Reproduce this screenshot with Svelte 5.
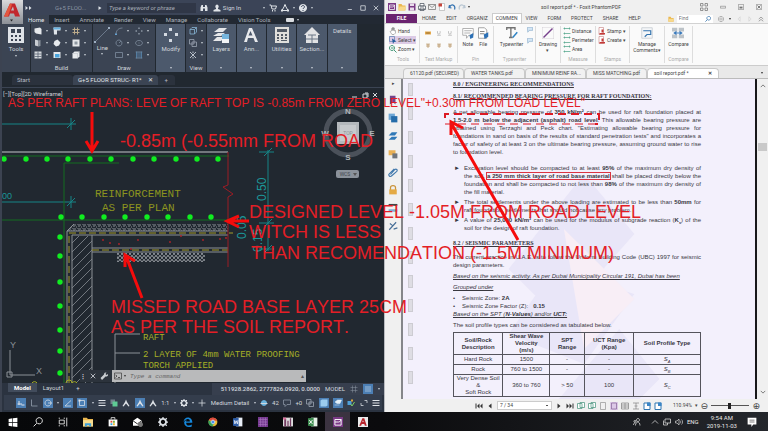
<script>
  // Each icon is a list of [path, fill, stroke, stroke width] on a 16x16 grid
  const W = '#dfe3e8';
  const P = '#7a3a86';
  const icons = {
    more: [['M1 4l5 4-5 4zM8 4l5 4-5 4z', W]],
    play: [['M4 3l8 5-8 5z', W]],
    find: [['M1 14V7l2-5h3v12zM10 14V2h3l2 5v7zM6 6h4v3H6z', W]],
    user: [['M8 1a4 4 0 0 1 2 7v2l5 2v3H1v-3l5-2V8a4 4 0 0 1 2-7z', W]],
    cart: [['M1 2h3l2 8h7l2-6H5', '', W, 2], ['M6 12h2v3H6zM11 12h2v3h-2z', W]],
    tri: [['M8 2l6 11H2z', '', W, 2], ['M6 1h4v3H6zM0 11h4v4H0zM12 11h4v4h-4z', W]],
    help: [['M8 0a8 8 0 1 1-.1 0z', W], ['M5 6c0-4 6-4 6 0 0 2-3 2-3 4M8 12v2', '', '#39435a', 2]],
    min: [['M2 12h11', '', W, 2]],
    max: [['M2 2h12v12H2z', '', W, 2]],
    close: [['M2 2l12 12M14 2L2 14', '', W, 2]],
    tools: [['M0 0h16v16H0z', W], ['M3 2h4v4H3zM9 2h4v4H9zM3 8h2v2H3zM7 8h2v2H7zM11 8h2v2h-2zM3 12h2v2H3zM7 12h2v2H7zM11 12h2v2h-2z', '#3b4453']],
    wall: [['M1 3l11-2 3 3v11l-11-2-3-3z', '#e5e8eb']],
    door: [['M2 1l7 2v12l-7-2z', '#c9cdd2'], ['M9 3l4-1v12l-4 1z', '#8a929c']],
    window: [['M1 1h14v14H1z', '#d5d9dd'], ['M8 1v14M1 6h14M1 11h14', '', '#535e6e', 1.5]],
    beam: [['M1 1h14v6H8v8H2z', '#e0e5ea'], ['M1 1h14v4H1z', '#68b4e2']],
    cup: [['M3 4l6-3 6 6-3 6-6 2-5-5z', '#e8ebee']],
    screen: [['M1 2h14v12H1z', '#e3e7eb'], ['M4 6h9v7H4z', '#49a4dd']],
    grid: [['M5 1v14M11 1v14M1 5h14M1 11h14', '', '#bbaa8a', 2]],
    frame: [['M1 1h14v14H1z', '#e4e7ea'], ['M5 5h6v6H5z', '#8d96a0']],
    box: [['M1 5l4-4h10v10l-4 4H1z', '#e9ecef'], ['M1 5h10v10M11 5l4-4', '', '#b7bdc4', 1]],
    line: [['M1 15L15 1', '', '#8391a3', 0.7], ['M0 14h2v2H0zM14 0h2v2h-2z', '#9fb0c3']],
    arc: [['M2 15C2 7 7 2 15 2', '', '#8391a3', 1.5], ['M0 13h4v3H0z', '#65a0cf']],
    circle: [['M8 2a6 6 0 1 1-.1 0zM8 8l4-4', '', '#8391a3', 1.5]],
    rect: [['M1 3h14v10H1z', '', '#8391a3', 1.5]],
    points: [['M7 1h2v3H7zM1 7h3v2H1zM12 7h3v2h-3zM7 12h2v3H7z', '#b2bdca']],
    oval: [['M8 3c9 0 9 10 0 10S-1 3 8 3zM7 8h2', '', '#8391a3', 1.5]],
    hatch: [['M3 1v14M6 1v14M10 1v14M13 1v14', '', '#5b8fb9', 1.5], ['M1 2h14M1 14h14', '', '#8391a3', 1]],
    cube: [['M2 5h9v9H2zM2 5l4-4h9v9l-4 4M11 5l4-4', '', '#8bbad9', 1.5]],
    copy: [['M1 1h9v9H1zM6 6h9v9H6z', '', '#a0aab7', 1.5]],
    cross: [['M2 2l12 12M14 2L2 14M8 1v3M8 12v3', '', '#b8c0ca', 2]],
    modify: [['M6 1h3v3H6zM1 6h3v3H1zM12 6h3v3h-3zM6 12h3v3H6z', '#d4dae2']],
    layers: [['M1 5l5-4h8l-4 4zM0 9l5-3h7l-4 3zM0 14l4-4h8l-4 4z', '#e5e7e9'], ['M9 7h7v9H9z', '#76b6de'], ['M9 12h7v4H9z', '#f3f5f7']],
    text: [['M1 15L6 1h3l6 14h-3l-1.500-4H5l-1 4zM5.500 8.500h4L7.500 4z', '#e8eaed']],
    calc: [['M1 0h14v16H1z', '#e0dfdc'], ['M3 2h10v3H3zM3 7h2v2H3zM7 7h2v2H7zM11 7h2v2h-2zM3 10h2v2H3zM7 10h2v2H7zM11 10h2v2h-2zM3 13h2v1H3zM7 13h6v1H7z', '#535b66']],
    house: [['M0 8l8-8 8 8h-2v8H2V8z', '#e1e2e4'], ['M4 8h8M8 8v8M2 12h12', '', '#6b7686', 1]],
    wrench: [['M1 12l7-7a4 4 0 0 1 5-4l-2 3 2 2 3-2a4 4 0 0 1-5 5l-7 7z', '#c8ccd0']],
    prompt: [['M1 2h14v12H1z', '', '#444', 1.500], ['M3 6l3 2-3 3M8 11h4', '', '#333', 1.500]],
    ortho: [['M3 1v13h12', '', '#9aa6b4', 1.500]],
    infer: [['M1 10h9M4 4v8M9 12h6', '', W, 2]],
    polar: [['M8 2a6 6 0 1 1-.1 0zM8 8h8', '', W, 1.500]],
    iso: [['M2 14L14 3M2 14h12', '', W, 1.500]],
    snap: [['M3 3h10v10H3z', '', W, 1.500], ['M1 1h4v4H1z', W]],
    lines: [['M1 3h14M1 8h14M1 13h14', '', W, 2]],
    green: [['M1 1h9v9H1z', '#73808b'], ['M5 5h10v10H5z', '#5ecb95']],
    man: [['M8 1l2 5 5 8-2 1-5-6-5 6-2-1 5-8z', W]],
    gear: [['M8 3a5 5 0 1 1-.1 0z', '', W, 3], ['M8 0v3M8 13v3M0 8h3M13 8h3M2 2l3 3M11 11l3 3M14 2l-3 3M5 11l-3 3', '', W, 2]],
    plus: [['M8 1v14M1 8h14', '', W, 1.500]],
    globe: [['M8 2a6 6 0 1 1-.1 0z', '#6bb4df'], ['M1 8h14v2H1z', '#cdd6de']],
    note: [['M1 2h14v9H8l-4 4v-4H1z', '', '#8f9aa8', 1.500]],
    blue: [['M1 3l3-2h11v12l-3 2H1z', '#9ccdf0']],
    pages: [['M2 6l5-4h8l-3 7H6zM1 12h10', '#e4f0f8', '#e4f0f8', 1]],
    tick: [['M1 4h8v8H1z', '#4f9fd8'], ['M7 10l3 4 5-8', '', '#7bcf65', 2], ['M8 1h4v4H8z', '#d9a63a']],
    expand: [['M9 3h5v5M7 13H2V8', '', W, 1.500]],
    dots: [['M3 3h2v2H3zM7 3h2v2H7zM11 3h2v2h-2zM3 7h2v2H3zM7 7h2v2H7zM11 7h2v2h-2zM3 11h2v2H3zM7 11h2v2H7zM11 11h2v2h-2z', '#eef5fb']],
    mesh: [['M5 1v14M11 1v14M1 5h14M1 11h14', '', '#8c96a3', 1]],
    fox: [['M0 0h16v16H0z', P], ['M3 4h10v9H3zM3 8h6M9 8c3 0 3-3 4-4', '', '#fff', 1.500]],
    folder: [['M1 2h6l2 3h6v10H1z', '#eab74f'], ['M3 7h13l-3 8H1z', '#f8d98b']],
    explorer: [['M0 1h6l2 2h8v12H0z', '#eab74f'], ['M0 5h16v10H0z', '#f8dc8e'], ['M3 15v-5h10v5h-3v-2H6v2z', '#3f9fd8']],
    save: [['M1 1h14v14H1z', P], ['M4 1h8v5H4zM4 9h8v6H4z', '#e9dcec']],
    print: [['M4 1h8v5H4zM1 6h14v7H1zM4 10h8v5H4z', '#fff', '#4d5560', 1.500]],
    mail: [['M1 3h14v10H1zM1 3l7 6 7-6', '', '#777', 1.500]],
    page: [['M3 1h10v14H3z', '#fff', '#999', 1], ['M1 1h7v6H1z', '#c6453b']],
    undo: [['M3 4l-1 5 5 1M3 9c3-9 13-5 10 4', '', '#3573b1', 2.500]],
    redo: [['M13 4l1 5-5 1M13 9C10 0 0 4 3 13', '', '#b9c6d2', 2.500]],
    hand: [['M5 8V3l2-1v5V1h2v6V2h2v6l2-1v5l-3 3H6L2 9z', '#fff', '#777', 1]],
    select: [['M1 1h10v10H1z', '', '#6486b4', 1.500], ['M6 5l9 6-5 1-2 4z', '#245c9c']],
    zoom: [['M6 1a5 5 0 1 1-.1 0zM10 10l5 5M4 6h5', '', '#48997b', 2]],
    abc: [['M0 4h16v8H0z', '#e5a94c'], ['M3 8h10', '', '#73552c', 2]],
    under: [['M4 3v5c0 4 7 4 7 0V3M3 14h10', '', '#999', 1.500]],
    tee: [['M3 3h10M8 3v10M3 8h10', '', '#b28b57', 2]],
    comment: [['M1 2h14v9H9l-3 4v-4H1z', '#fff', '#9a9a9a', 1], ['M3 5h10M3 8h8', '', '#9a9a9a', 1], ['M10 11l5-3v6l-4 2z', '#2c70b5']],
    attach: [['M2 1h8l3 3v11H2z', '#fff', '#888', 1], ['M4 6h6M4 9h6', '', '#888', 1.500], ['M9 10l6-3v6l-5 3z', '#2c70b5']],
    type: [['M1 4V1h11v3M6.500 1v13M4 14h5', '', '#737373', 1.800], ['M9 14l6-7', '', '#2e83c4', 2]],
    callout: [['M1 1h14v8H6l-4 5z', '#d5e7f5', '#4a7fae', 1]],
    draw: [['M2 14L14 2', '', '#77408c', 2], ['M0 0h16v16H0z', '', '#c9c4cc', 1]],
    ruler: [['M1 3h14M1 13h14M3 1v4M13 1v4M3 11v4', '', '#53a58b', 1.500]],
    stamp: [['M2 1h9v14H2z', '#fff', '#b66', 1], ['M3 12h11v3H3zM7 5h4v6H7z', '#c43b38']],
    manage: [['M1 1h14v14H1z', '#f4f6f8', '#c2c8ce', 1], ['M3 5h10v5H8l-3 3', '', '#3272ad', 1.500]],
    compare: [['M0 1h7v5H0zM9 1h7v5H9zM0 10h7v5H0zM9 10h7v5H9z', '#bdc3c8'], ['M3 8h10M6 6L3 8l3 2M10 6l3 2-3 2', '', '#3979bb', 1.500]],
    tiles: [['M1 1h5v5H1zM10 1h5v5h-5zM1 10h5v5H1zM10 10h5v5h-5z', '', '#777', 1.500]],
    dash: [['M1 6h14v5H1z', '', '#777', 1.500]],
    pin: [['M1 1h14v14H1z', '', '#777', 1.500], ['M4 7h8v5H4z', '#777']],
    quit: [['M1 1h14v14H1z', '', '#777', 1.500], ['M4 4l8 8M12 4l-8 8', '', '#555', 2]],
    bookmark: [['M3 1h9v14l-4-4-5 4z', '#71458c']],
    stack: [['M1 1h10v10H1z', '#6ea8d6'], ['M5 5h10v10H5z', '#256da9']],
    sheets: [['M1 7l5-5h9l-4 5zM1 14l5-5h9l-4 5z', '#2f79b7']],
    tag: [['M1 2h11v8H1z', '#eab154'], ['M7 7h8v8H7z', '#70757b']],
    clip: [['M4 12l7-8c2-2 5 1 3 3l-8 7c-3 3-6-1-4-3l8-8', '', '#4279ac', 1.800]],
    lock: [['M4 8V4c0-4 8-4 8 0v4', '', '#c9933a', 2], ['M2 7h12v8H2z', '#e4aa43']],
    sign: [['M2 14L13 2M3 4l4 3M9 13l6-2', '', '#476f98', 1.800]],
    bars: [['M1 3h14', '', '#444', 3], ['M1 10h14v4H1z', '#7facd6']],
    lens: [['M10 1a5 5 0 1 1-.1 0zM6 10l-5 5', '', '#2f6ea8', 2]],
    leaf: [['M3 1h10v14H3z', '', '#999', 1.500]],
    leafon: [['M0 0h16v16H0z', '#dcc9e7'], ['M3 2h10v12H3z', '', '#8a6a9b', 1.500]],
    cols: [['M1 2h14v12H1zM8 2v12M1 6h14M1 10h14', '', '#888', 1.500]],
    fit: [['M2 2h12M2 14h12M8 2v12M5 8h6', '', '#888', 1.500]],
    rotate: [['M2 2h12v13H2z', '#fff', '#2f76b1', 2], ['M8 1h7v7H8z', '#3b86c6']],
    jump: [['M1 3h9v10H1zM6 1h9v10H6z', '#fff', '#4e9780', 1.500]],
    first: [['M2 3v10', '', '#333', 2], ['M9 3L4 8l5 5zM15 3l-5 5 5 5z', '#333']],
    prev: [['M11 3L5 8l6 5z', '#333']],
    next: [['M5 3l6 5-6 5z', '#333']],
    last: [['M14 3v10', '', '#333', 2], ['M1 3l5 5-5 5zM7 3l5 5-5 5z', '#333']],
    start: [['M1 3l6-1v6H1zM8 2l7-1v7H8zM1 9h6v6l-6-1zM8 9h7v7l-7-1z', '#fff']],
    search: [['M10 1a5 5 0 1 1-.1 0zM6 10l-5 5', '', '#eee', 1.500]],
    task: [['M2 1v2M2 5h8v6H2zM2 13v2M10 1v2M10 13v2M14 1v14', '', '#ddd', 1.500]],
    store: [['M5 4V1h6v3', '', '#fff', 1.200], ['M1 4h14v11H1z', '#fff'], ['M4 6h3v3H4z', '#e34f35'], ['M8 6h3v3H8z', '#78b542'], ['M4 10h3v3H4z', '#37a6de'], ['M8 10h3v3H8z', '#f0bb35']],
    post: [['M0 6l7-5 7 5v8H0z', '#fff'], ['M0 6l7 5 7-5', '', '#222', 1.500], ['M12 8a4 4 0 1 1-.1 0z', '#777']],
    edge: [['M1 8C1-2 15-2 15 9H5c0 6 6 5 9 3v3C8 18 1 14 2 8c1-2 3-3 5-4-2 1-2 2-2 3h6c0-5-6-5-10 1z', '#1688dc']],
    chrome: [['M8 1a7 7 0 1 1-.1 0z', '#e8bd35'], ['M1 5c4-7 12-4 14 1H8z', '#dd4b3d'], ['M1 5c-2 6 2 10 6 10l3-5z', '#36a15b'], ['M8 5a3 3 0 1 1-.1 0z', '#4a8df0', '#fff', 1]],
    word: [['M5 1h10v14H5z', '#e8eef7'], ['M0 2l9-1v14l-9-1z', '#2d5ca6'], ['M2 5l1 6 2-5 2 5 1-6', '', '#fff', 1.200]],
    purple: [['M0 0h16v16H0z', '#75398f'], ['M4 1v14M8 1v14M12 1v14M1 4h14M1 8h14M1 12h14', '', '#a773bd', 1]],
    photo: [['M0 1h16v14H0z', '#ddd'], ['M2 3h3v12H2zM7 6h2v9H7zM11 2h2v13h-2z', '#733c61'], ['M0 1h5v3H0z', '#db6f9d']],
    excel: [['M5 1h10v14H5z', '#e6f2e8'], ['M0 2l9-1v14l-9-1z', '#3e8c50'], ['M2 5l5 6M7 5l-5 6', '', '#fff', 1.500]],
    cad: [['M0 0h16v16H0z', '#ececec'], ['M2 14L7 2h3l4 12h-3l-1-3H6l-1 3zM7 8h2L8 5z', '#b8232b']],
    people: [['M10 1a3 3 0 1 1-.1 0zM5 15c0-9 9-9 9 0M4 5a2 2 0 1 1-.1 0zM1 14c0-3 1-4 3-4', '', '#ddd', 1.500]],
    up: [['M2 11l6-6 6 6', '', '#ddd', 1.500]],
    net: [['M4 2h11v8H4zM1 5v9h8M9 10v4', '', '#ddd', 1.500]],
    sound: [['M1 6h3l4-4v12l-4-4H1zM10 5c2 2 2 4 0 6M13 3c3 3 3 7 0 10', '', '#ddd', 1.300]],
    notice: [['M1 1h14v11H10l-3 4v-4H1z', '#fff'], ['M4 5h8M4 8h8', '', '#333', 1]],
    ring: [['M8 1a7 7 0 1 1-.1 0zM8 5a3 3 0 1 1-.1 0z', '', '#888', 1.500]],
    back: [['M11 2L5 8l6 6z', '', '#bbb', 1]],
    ahead: [['M5 2l6 6-6 6z', '', '#bbb', 1]],
    fold: [['M2 8l6-5 6 5M2 14l6-5 6 5', '', '#666', 1.500]],
    scrollup: [['M2 11l6-6 6 6', '', '#555', 2]],
    scrolldown: [['M2 5l6 6 6-6', '', '#555', 2]],
  };

  const cadTabs = ['Home', 'Insert', 'Annotate', 'Render', 'View', 'Manage', 'Collaborate', 'Vision Tools'];
  const build = ['wall', 'beam', 'grid', 'door', 'cup', 'frame', 'window', 'screen', 'box'];
  const draw = ['arc', 'points', 'circle', 'oval', 'rect', 'hatch'];
  const panels = [
    ['layers', 'Layers'],
    ['text', 'Ann...'],
    ['calc', 'Utilities'],
    ['house', 'Section...'],
    ['', 'Details'],
  ];
  const pdfTabs = ['HOME', 'EDIT', 'ORGANIZ', 'COMMEN', 'VIEW', 'FORM', 'PROTECT', 'SHARE', 'HELP'];
  const docs = ['61120.pdf (SECURED)', 'WATER TANKS.pdf', 'MINIMUM REINF RA...', 'MISS MATCHING.pdf', 'soil report.pdf *'];
  const side = ['bookmark', 'stack', 'sheets', 'tag', 'clip', 'lock', 'bars', 'sign'];
  const apps = ['start', 'search', 'task', 'explorer', 'store', 'post', 'gear', 'edge', 'chrome', 'word', 'purple', 'photo', 'excel', 'fox', 'cad'];

  const topBars = [4, 26, 47, 68, 90, 111, 133, 154, 176, 197, 218];
  const lowBars = [61, 82, 104, 125, 147, 168, 190, 211];
  const sideBars = [237, 256, 282, 306, 330, 351, 373];
  const specks = [[103, 240], [110, 243], [119, 244], [131, 249], [138, 240], [170, 242], [181, 236], [203, 240], [220, 239], [226, 238]];

  const soils = [
    ['Hard Rock', '1500', '-', '-', 'A'],
    ['Rock', '760  to  1500', '-', '-', 'B'],
    ['Very Dense Soil\n&\nSoft Rock', '360  to  760', '> 50', '100', 'C'],
  ];
</script>

{#snippet icon(name, size = 's')}
  <svg class="icon {size}" viewBox="0 0 16 16" aria-hidden="true">
    {#each icons[name] as [d, fill, stroke, width]}
      <path {d} fill={fill || 'none'} stroke={stroke || 'none'} stroke-width={width || 0} />
    {/each}
  </svg>
{/snippet}

<div class="desktop">
  <main class="windows">
    <section class="cad">
      <header class="cad-top">
        <button class="logo" aria-label="Application menu">
          <svg viewBox="0 0 20 20"><path d="M2 14L8 1h5l5 13h-5l-1-3H8l-1 3zM9 8h3l-1-4z" fill="#c2272d" /><path d="M2 14L8 1l2 1-4 12z" fill="#e4573f" /><path d="M8 17h3l-1.500 2z" fill="#222" /></svg>
        </button>
        <div class="cad-head">
          <div class="cad-title">
            {@render icon('more')}
            <span class="file-name">G+5 FLOO...</span>
            {@render icon('play', 'xs')}
            <input class="keyword" aria-label="Search" placeholder="Type a keyword or phrase" />
            {@render icon('find')}
            <button class="sign">{@render icon('user')} Sign In</button>
            <i class="caret"></i>
            {@render icon('cart')}
            {@render icon('tri')}
            <i class="caret"></i>
            {@render icon('help')}
            <i class="caret"></i>
            <div class="win-buttons">
              <button aria-label="Minimize">{@render icon('min', 'xs')}</button>
              <button aria-label="Maximize">{@render icon('max', 'xs')}</button>
              <button aria-label="Close">{@render icon('close', 'xs')}</button>
            </div>
          </div>
          <nav class="cad-tabs">
            {#each cadTabs as tab}
              <button class:active={tab === 'Home'}>{tab}</button>
            {/each}
            <span class="media"></span><i class="caret"></i>
          </nav>
        </div>
      </header>

      <div class="ribbon">
        <div class="panel tall">{@render icon('tools', 'l')}<span>Tools</span><i class="caret"></i></div>
        <div class="panel set">
          <div class="grid three">
            {#each build as name}<span class="pick">{@render icon(name)}<i class="caret"></i></span>{/each}
          </div>
          <span class="panel-name">Build</span>
        </div>
        <div class="panel set">
          <div class="draw">
            <div class="line">{@render icon('line', 'l')}<span>Line</span><i class="caret"></i></div>
            <div class="grid two">
              {#each draw as name}<span class="pick">{@render icon(name)}<i class="caret"></i></span>{/each}
            </div>
          </div>
          <span class="panel-name">Draw</span>
        </div>
        <div class="panel tall blue">{@render icon('modify', 'l')}<span>Modify</span><i class="caret end"></i></div>
        <div class="panel set">
          <div class="grid one">
            {#each ['cube', 'copy', 'cross'] as name}<span class="pick">{@render icon(name)}<i class="caret"></i></span>{/each}
          </div>
          <span class="panel-name">View</span>
        </div>
        {#each panels as [name, label]}
          <div class="panel tall blue">
            {#if name}{@render icon(name, 'l')}{/if}
            <span>{label}</span><i class="caret end"></i>
          </div>
        {/each}
      </div>

      <nav class="cad-docs">
        <button>Start</button>
        <button class="active">G+5 FLOOR STRUC- R1*<b>✕</b></button>
        <button class="add">+</button>
      </nav>

      <div class="canvas">
        <svg class="drawing" viewBox="2 88 382 295" preserveAspectRatio="xMinYMin slice">
          <defs>
            <pattern id="wall" width="9" height="9" patternUnits="userSpaceOnUse">
              <path d="M-1 10L10-1M3 15L15 3M-6 6L6-6" stroke="#858b92" stroke-width="0.8" />
            </pattern>
            <pattern id="speck" width="5" height="4" patternUnits="userSpaceOnUse">
              <path d="M0 1h1M2 0h1M3 2h2M1 3h1M4 0v1" stroke="#a3a8ad" stroke-width="0.8" />
            </pattern>
            <pattern id="weave" width="4" height="4" patternUnits="userSpaceOnUse">
              <path d="M0 0l4 4M4 0L0 4M2 0v2" stroke="#9ca1a6" stroke-width="0.7" />
            </pattern>
          </defs>

          <g class="cyan">
            <path d="M2 124h74M2 202h74M71 118v12M71 196v12M67 128l8-8M67 206l8-8" />
            <path d="M268 150v101M259 152h15M259 223h15M259 249h15M264 156l8-8M264 227l8-8M264 253l8-8" />
            <text class="dim" x="2" y="199">00</text>
            <text class="dim big" transform="translate(266 201) rotate(-90)">0.50</text>
            <text class="dim big" transform="translate(246 239) rotate(-90)">0.05</text>
            <text class="dim big" transform="translate(262 252) rotate(-90)">0.15</text>
          </g>

          <g class="rebar">
            <path d="M2 156h227M2 220h227M119 163H64v220" />
            {#each topBars as x}<circle cx={x} cy="159" r="2.700" />{/each}
            {#each lowBars as x}<circle cx={x} cy="217" r="2.700" />{/each}
            {#each sideBars as y}<circle cx="60" cy={y} r="2.700" />{/each}
          </g>

          <path d="M67 231l7-7h154v7z" fill="url(#speck)" />
          <rect x="72" y="236" width="20" height="147" fill="url(#wall)" />
          <rect x="117" y="253" width="88" height="9" fill="url(#weave)" />
          <path class="white" d="M67 383V231l7-7M67 231h161M228 235H72v148M92 235v148M92 248h136M92 252h136" />
          <path class="white bright" d="M2 152h226" />
          <path class="yellow dash" d="M69 383V233h164M92 250h136" />
          <path class="break" d="M228 152v33l-5 2 10 7-5 3v70" />
          {#each specks as [x, y]}<circle cx={x} cy={y} r="0.900" fill="#b3222a" />{/each}

          <path class="leader" d="M140 334h-25v49M115 353h25" />
          <g class="olive">
            <text class="label" x="95" y="197">REINFORCEMENT</text>
            <text class="label" x="102" y="211">AS PER PLAN</text>
          </g>
          <g class="lime">
            <text class="callout" x="143" y="340">RAFT</text>
            <text class="callout" x="143" y="357">2 LAYER OF 4mm WATER PROOFING</text>
            <text class="callout" x="143" y="368">TORCH APPLIED</text>
            <path d="M32 383a3 3 0 0 1 5 0M66 383a3 3 0 0 1 6 0M72 383a3 3 0 0 1 5 0" fill="none" stroke="#a4aa27" />
          </g>

          <path class="ucs" d="M10 350v25h25M7 372h5v5H7z" />
          <text class="axis" x="10" y="348">Y</text>
          <text class="axis" x="36" y="374">X</text>

          <circle cx="348" cy="133" r="22" fill="none" stroke="#4b515a" stroke-width="5" />
          <rect x="337" y="122" width="22" height="22" fill="#b4b8bc" />
          <rect x="340" y="125" width="16" height="16" fill="#c6c9cc" />
          <text class="tiny" x="348" y="135">TOP</text>
          <g class="compass">
            <text x="348" y="114">N</text><text x="348" y="160">S</text><text x="325" y="136">W</text><text x="372" y="136">E</text>
          </g>
          <rect x="336" y="170" width="23" height="8" rx="2" fill="#8b929b" />
          <text class="tiny wcs" x="345" y="176">WCS</text>
          <path d="M353 173h4l-2 3z" fill="#555" />
          <path d="M352 97h5M363 94h4v4h-4zM365 93h3v4M373 93l4 4M377 93l-4 4" fill="none" stroke="#d5d9dd" />
          <text class="view" x="3" y="96">[−][Top][2D Wireframe]</text>
        </svg>
        <div class="command">
          <b>⋮</b>{@render icon('close', 'xs')}{@render icon('wrench')}
          <label>{@render icon('prompt')}<i class="caret dark"></i><input placeholder="Type a command" aria-label="Command" /><span>▴</span></label>
        </div>
      </div>

      <footer class="cad-foot">
        <div class="foot-row">
          <nav class="layouts"><button class="active">Model</button><button>Layout1</button><button>+</button></nav>
          <div class="coords"><b>511928.2862, 2777826.0920, 0.0000</b><span>MODEL</span>{@render icon('mesh')}<span class="on">{@render icon('dots')}</span><i class="caret"></i></div>
        </div>
        <div class="status">
          <span class="on">{@render icon('infer')}</span>
          {@render icon('ortho')}
          <span class="on">{@render icon('polar')}</span>
          <i class="caret"></i>
          <span class="on">{@render icon('iso')}</span>
          <span class="on">{@render icon('snap')}</span>
          <i class="caret"></i>
          {@render icon('lines')}{@render icon('green')}{@render icon('man')}
          <span class="on">{@render icon('man')}</span>
          {@render icon('man')}
          <span>1:1</span><i class="caret"></i>
          {@render icon('gear')}<i class="caret"></i>
          {@render icon('plus')}
          <span>Medium Detail</span><i class="caret"></i>
          {@render icon('globe')}<span>42</span>{@render icon('note')}<span>+0</span>{@render icon('copy')}
          <span class="on">{@render icon('blue')}</span>
          <span class="on">{@render icon('pages')}</span>
          {@render icon('tick')}{@render icon('expand')}{@render icon('lines')}
        </div>
      </footer>
    </section>

    <section class="pdf">
      <header class="pdf-title">
        <div class="quick">
          {#each ['fox', 'folder', 'save', 'print', 'mail', 'page', 'undo', 'redo'] as name}{@render icon(name)}{/each}
          <i class="caret dark"></i>
        </div>
        <span>soil report.pdf * - Foxit PhantomPDF</span>
        <div class="pdf-buttons">
          <button aria-label="Ribbon options">{@render icon('tiles')}</button>
          <button aria-label="Minimize">{@render icon('dash', 'xs')}</button>
          <button aria-label="Restore">{@render icon('pin', 'xs')}</button>
          <button aria-label="Close">{@render icon('quit', 'xs')}</button>
        </div>
      </header>
      <nav class="pdf-tabs">
        <button class="file">FILE</button>
        {#each pdfTabs as tab}<button class:active={tab === 'COMMEN'}>{tab}</button>{/each}
        <div class="finder">{@render icon('folder', 'xs')}<label><input aria-label="Find" placeholder="Find" />{@render icon('lens', 'xs')}</label></div>
        <div class="hints">{@render icon('ring', 'xs')}<i class="caret dark"></i>{@render icon('back', 'xs')}{@render icon('ahead', 'xs')}{@render icon('fold', 'xs')}</div>
      </nav>

      <div class="tools">
        <div class="tool-group hand">
          <button>{@render icon('hand')}Hand</button>
          <button class="chosen">{@render icon('select')}Select ▾</button>
          <button>{@render icon('zoom')}Zoom ▾</button>
          <small>Tools</small>
        </div>
        <div class="tool-group markup">
          <div class="marks">{#each ['abc', 'under', 'under', 'tee', 'tee', 'tee'] as name}{@render icon(name, 'xs')}{/each}</div>
          <small>Text Markup</small>
        </div>
        <div class="tool-group pins">
          <div class="pair"><button class="stacked">{@render icon('comment', 'b')}Note</button><button class="stacked">{@render icon('attach', 'b')}File</button></div>
          <small>Pin</small>
        </div>
        <div class="tool-group typing">
          <div class="pair"><button class="stacked">{@render icon('type', 'b')}Typewriter</button><div class="boxes">{@render icon('callout', 'xs')}{@render icon('callout', 'xs')}</div></div>
          <small>Typewriter</small>
        </div>
        <div class="tool-group drawing-tool"><button class="stacked">{@render icon('draw', 'b')}Drawing<br />▾</button></div>
        <div class="tool-group measure">
          <button>{@render icon('ruler')}Distance</button><button>{@render icon('ruler')}Perimeter</button><button>{@render icon('ruler')}Area</button>
          <small>Measure</small>
        </div>
        <div class="tool-group stamps">
          <button>{@render icon('stamp')}Stamp ▾</button><button>{@render icon('stamp')}Create ▾</button>
          <small>Stamps</small>
        </div>
        <div class="tool-group manage"><button class="stacked">{@render icon('manage', 'b')}Manage<br />Comments▾</button></div>
        <div class="tool-group compare"><button class="stacked">{@render icon('compare', 'b')}Compare</button><small>Compare</small></div>
      </div>

      <nav class="pdf-docs">
        {#each docs as doc, i}<button class:active={i === 4}>{doc}{#if i === 4}<b>✕</b>{/if}</button>{/each}
        <i class="caret dark"></i>
      </nav>

      <div class="reader">
        <aside><span>▸</span>{#each side as name}{@render icon(name, 'm')}{/each}</aside>
        <div class="sheet">
          <svg class="watermark" viewBox="0 0 350 320" preserveAspectRatio="none" aria-hidden="true">
            <path d="M180 95l50 60-75 85-50-50zM150 190l80 25-50 70-75-30zM215 250l40 50-20 20h-80z" fill="#e9e6f8" />
            <path d="M160 150l70 70-50 50z" fill="#f8eef6" />
          </svg>
          <div class="holes">{#each Array(13) as _}<i></i>{/each}</div>
          <article>
            <h2>8.0 / ENGINEERING RECOMMENDATIONS</h2>
            <h2 class="second">8.1/ RECOMMENDED BEARING PRESSURE FOR RAFT FOUNDATION:</h2>
            <p class="main">
              <span>A net allowable bearing pressure of <b>350 kN/m²</b> can be used for raft foundation placed at</span>
              <span><b>1.5-2.0 m below the adjacent (asphalt) road level</b>. This allowable bearing pressure are</span>
              <span>obtained using Terzaghi and Peck chart. "Estimating allowable bearing pressure for</span>
              <span>foundations in sand on basis of the results of standard penetration tests" and incorporates a</span>
              <span>factor of safety of at least 3 on the ultimate bearing pressure, assuming ground water to rise</span>
              <span class="left">to foundation level.</span>
            </p>
            <ul class="findings">
              <li>
                <span>Excavation level should be compacted to at least <b>95%</b> of the maximum dry density of</span>
                <span>the soil. <b class="boxed">a 250 mm thick layer of road base material</b> shall be placed directly below the</span>
                <span>foundation and shall be compacted to not less than <b>98%</b> of the maximum dry density of</span>
                <span class="left">the fill material.</span>
              </li>
              <li>
                <span>The total settlements under the above loading are estimated to be less than <b>50mm</b> for</span>
                <span class="left">raft foundation, settlements that should not cause any problem.</span>
              </li>
              <li>
                <span>A value of <b>25,000 kN/m³</b> can be used for the modulus of subgrade reaction (<b>K<sub>s</sub></b>) of the</span>
                <span class="left">soil for the design of raft foundation.</span>
              </li>
            </ul>
            <h2 class="seismic">8.2 / SEISMIC PARAMETERS</h2>
            <p class="code">
              <span>The current practice in U.A.E. is to follow the Uniform Building Code (UBC) 1997 for seismic</span>
              <span class="left">design parameters.</span>
            </p>
            <p class="slant">Based on the seismic activity. As per Dubai Municipality Circular 191, Dubai has been</p>
            <p class="slant">Grouped under</p>
            <ul class="zones">
              <li>Seismic Zone: <b>2A</b></li>
              <li>Seismic Zone Factor (Z): &nbsp; <b>0.15</b></li>
            </ul>
            <p class="slant close">Based on the SPT (<b>N-Values</b>) and/or <b>UCT:</b></p>
            <p class="intro">The soil profile types can be considered as tabulated below.</p>
            <table>
              <thead>
                <tr><th>Soil/Rock<br />Description</th><th>Shear Wave<br />Velocity<br />(m/s)</th><th>SPT<br />Range</th><th>UCT Range<br />(Kpa)</th><th>Soil Profile Type</th></tr>
              </thead>
              <tbody>
                {#each soils as [name, speed, spt, uct, type]}
                  <tr><td>{name}</td><td>{speed}</td><td>{spt}</td><td>{uct}</td><td><i>S<sub>{type}</sub></i></td></tr>
                {/each}
              </tbody>
            </table>
          </article>
        </div>
        <div class="scroll">{@render icon('scrollup', 'xs')}<i></i><span class="down">{@render icon('scrolldown', 'xs')}</span></div>
      </div>

      <footer class="pdf-foot">
        {@render icon('first')}{@render icon('prev')}
        <select aria-label="Page"><option>7 / 34</option></select>
        {@render icon('next')}{@render icon('last')}{@render icon('jump')}{@render icon('jump')}
        {#each ['leaf', 'leafon', 'cols', 'fit', 'rotate', 'rotate'] as name}{@render icon(name)}{/each}
        <span>110.94% &nbsp;▾</span>
        <b>⊖</b><input type="range" aria-label="Zoom" value="48" /><b>⊕</b>
      </footer>
    </section>

    <svg class="markups" viewBox="0 0 768 412" preserveAspectRatio="xMinYMin meet">
      <text class="small" x="8" y="107">AS PER RAFT PLANS: LEVE OF RAFT TOP IS -0.85m FROM ZERO LEVEL"+0.30m FROM LOAD LEVEL"</text>
      <text x="120" y="147">-0.85m (-0.55mm FROM ROAD</text>
      <text x="249" y="218">DESIGNED LEVEL -1.05M FROM ROAD LEVEL</text>
      <text x="249" y="238">WITCH IS LESS</text>
      <text x="251" y="259">THAN RECOMENDATION (-1.5M MINIMUM)</text>
      <text x="111" y="313">MISSED ROAD BASE LAYER 25CM</text>
      <text x="111" y="333">AS PER THE SOIL REPORT.</text>
      <path d="M92 112v38M86 141l6 10 6-10M249 221h-21M239 216l-12 5 12 6M142 298l-16-42M125 267v-12l10 6M518 240l-67-117M451 135v-13l12 6" />
      <path class="thin" d="M445 118v-4h154v10h-4" />
      <path class="thin faint" d="M445 124h150" />
    </svg>
  </main>

  <footer class="taskbar">
    {#each apps as name}
      <button class:running={name === 'fox'} aria-label={name}>{@render icon(name, 'm')}</button>
    {/each}
    <div class="tray">
      {@render icon('people')}<span class="hidden-icons">{@render icon('up')}</span>{@render icon('net')}{@render icon('sound')}
      <span>ENG</span>
      <time>9:54 AM<br />2019-11-03</time>
      {@render icon('notice', 'm')}
    </div>
  </footer>
</div>

<style>
  :global(body) {
    background: #101114;
  }

  .desktop {
    display: flex;
    flex-direction: column;
    height: 100vh;
    overflow: hidden;
    font-family: Roboto, 'Liberation Sans', sans-serif;
    font-size: 6px;
    line-height: 8px;
  }

  .windows {
    position: relative;
    display: grid;
    grid-template-columns: 1fr 1fr;
    grid-template-rows: minmax(0, 1fr);
    flex: 1;
    min-height: 0;
  }

  button,
  input,
  select {
    font: inherit;
    color: inherit;
    border: 0;
    padding: 0;
    margin: 0;
    background: none;
    min-width: 0;
    white-space: nowrap;
  }

  .icon { flex: none; width: 8px; height: 8px; }
  .icon.xs { width: 6px; height: 6px; }
  .icon.m { width: 10px; height: 10px; }
  .icon.b { width: 12px; height: 12px; }
  .icon.l { width: 16px; height: 16px; }

  .caret {
    flex: none;
    border: 1px solid transparent;
    border-top: 2px solid #c5cbd3;
    border-bottom: 0;
  }

  .caret.dark { border-top-color: #333; }

  /* CAD window */
  .cad {
    display: flex;
    flex-direction: column;
    min-width: 0;
    border-left: 2px solid #3c4351;
    background: #212830;
    color: #d3d8de;
  }

  .cad-top { display: flex; background: #3b4457; }

  .logo {
    width: 21px;
    background: linear-gradient(#d9dadc, #8c9097);
  }

  .logo svg { display: block; width: 20px; height: 21px; }
  .cad-head { flex: 1; min-width: 0; }

  .cad-title {
    display: flex;
    align-items: center;
    gap: 4px;
    height: 15px;
    padding: 0 5px 0 2px;
  }

  .file-name { width: 38px; padding-left: 18px; color: #8a93a1; white-space: nowrap; overflow: hidden; }
  .keyword { flex: 1; height: 10px; padding-left: 2px; background: #303747; font-style: italic; }
  .keyword::placeholder { color: #aab1bb; }
  .sign { display: flex; align-items: center; gap: 2px; margin: 0 18px 0 1px; }
  .win-buttons { display: flex; gap: 7px; margin-left: 30px; }
  .win-buttons button { display: flex; }

  .cad-tabs {
    display: flex;
    align-items: center;
    height: 9px;
    background: #222933;
  }

  .cad-tabs button { padding: 0 5px; line-height: 9px; color: #aeb4bd; }
  .cad-tabs .active { background: #3b4453; color: #e6e9ed; }
  .media { width: 8px; height: 4px; margin: 0 3px 0 10px; border-radius: 1px; background: #dadde1; }

  .ribbon {
    display: grid;
    grid-template-columns: 28fr 60fr 62fr 29fr 19fr repeat(5, 29fr) 26fr;
    gap: 1px;
    height: 48px;
  }

  .panel {
    display: flex;
    flex-direction: column;
    align-items: center;
    min-width: 0;
    overflow: hidden;
    background: #3b4453;
    white-space: nowrap;
  }

  .panel.blue { background: #4c596c; }
  .tall { gap: 2px; padding: 3px 0; }
  .tall .end { margin-top: auto; }
  .set { justify-content: space-between; padding-top: 3px; }
  .grid { display: grid; gap: 4px 2px; }
  .three { grid-template-columns: repeat(3, 17px); }
  .two { grid-template-columns: repeat(2, 18px); }
  .pick { display: flex; align-items: center; gap: 4px; }
  .draw { display: flex; gap: 5px; }
  .line { display: flex; flex-direction: column; align-items: center; gap: 1px; }

  .cad-docs {
    display: flex;
    align-items: flex-end;
    height: 16px;
    box-sizing: border-box;
    padding: 3px 0 2px 10px;
    border-bottom: 1px solid #3b4453;
  }

  .cad-docs button { padding: 0 5px; line-height: 10px; background: #2b323d; border-radius: 3px 3px 0 0; text-align: left; color: #b5bbc4; }
  .cad-docs button:first-child { width: 61px; }
  .cad-docs .active { background: #3b4453; color: #e3e6ea; }
  .cad-docs b { margin-left: 6px; font-weight: 400; }
  .cad-docs .add { padding: 0 7px; }

  .canvas { position: relative; flex: 1; min-height: 0; }
  .drawing { display: block; width: 100%; height: 100%; }
  .cyan path { fill: none; stroke: #168486; }
  .cyan text { fill: #1c9799; }
  .rebar path { fill: none; stroke: #146d20; }
  .rebar circle { fill: #10ed20; }
  .white { fill: none; stroke: #8c9095; stroke-width: 1; }
  .bright { stroke: #c3c6c9; }
  .yellow { fill: none; stroke: #a59b2a; }
  .dash { stroke-dasharray: 7 3; }
  .break { fill: none; stroke: #9c1c25; }
  .leader, .ucs { fill: none; stroke: #8c9197; }
  .olive { fill: #8c941f; }
  .lime { fill: #a6af26; }
  .dim { font: 9px 'Liberation Sans', sans-serif; }
  .dim.big { font-size: 12px; }
  .label { font: 11px 'Liberation Mono', monospace; }
  .callout { font: 9px 'Liberation Mono', monospace; }
  .axis { font: 9px 'Liberation Sans', sans-serif; fill: #8c9197; }
  .view { font-size: 6px; fill: #cdd1d5; }
  .tiny { font-size: 5px; fill: #8c9197; text-anchor: middle; }
  .wcs { fill: #3f454d; }
  .compass { font: bold 8px 'Liberation Sans', sans-serif; fill: #b0b4b8; text-anchor: middle; }

  .command {
    position: absolute;
    left: 78px;
    bottom: 1px;
    display: flex;
    align-items: center;
    gap: 4px;
    width: 226px;
    height: 12px;
    background: #2c333c;
  }

  .command label {
    display: flex;
    flex: 1;
    align-items: center;
    gap: 2px;
    height: 12px;
    padding: 0 2px;
    background: #b9babb;
    color: #555;
  }

  .command input { flex: 1; padding-left: 2px; font: italic 6px 'Liberation Mono', monospace; }
  .command input::placeholder { color: #666; }

  .cad-foot { background: #2b3340; }
  .foot-row { display: flex; justify-content: space-between; height: 12px; }
  .layouts { display: flex; padding-left: 6px; }
  .layouts button { height: 9px; padding: 0 6px; }
  .layouts .active { background: #424c5c; color: #fff; font-weight: 700; }
  .coords { display: flex; align-items: center; gap: 5px; padding: 0 4px 0 9px; background: #373f4e; }
  .coords b { font-weight: 500; }
  .on { display: flex; padding: 1px; background: #4c7fb4; }

  .status {
    display: flex;
    align-items: center;
    justify-content: space-between;
    height: 15px;
    margin: 0 2px 2px;
    padding: 0 2px 0 12px;
    background: #343d4c;
    white-space: nowrap;
  }

  /* PDF window */
  .pdf {
    display: flex;
    flex-direction: column;
    min-width: 0;
    min-height: 0;
    border-left: 1px solid #b9bbc0;
    background: #f0f0f0;
    color: #444;
    font-size: 5px;
    line-height: 7px;
  }

  .pdf-title {
    display: grid;
    grid-template-columns: 153px auto 1fr;
    align-items: center;
    height: 14px;
    padding: 0 6px 0 3px;
  }

  .quick, .pdf-buttons { display: flex; align-items: center; gap: 2px; }
  .pdf-buttons { justify-content: flex-end; gap: 12px; }
  .pdf-buttons button { display: flex; }

  .pdf-tabs {
    display: flex;
    align-items: center;
    height: 9px;
    padding: 0 4px 0 1px;
    border-bottom: 1px solid #d2d2d2;
  }

  .pdf-tabs button { padding: 0 5px; line-height: 9px; }
  .pdf-tabs .file { width: 31px; background: #6a236f; color: #fff; font-weight: 700; }
  .pdf-tabs .active { padding: 0 3px; background: #fff; outline: 1px solid #ccc; }
  .finder { display: flex; flex: 1; align-items: center; gap: 3px; margin-left: 22px; }
  .finder label { display: flex; flex: 1; align-items: center; min-width: 0; height: 8px; padding: 0 2px; background: #fff; }
  .finder input { flex: 1; width: 100%; }
  .hints { display: flex; align-items: center; gap: 5px; margin-left: 5px; }

  .tools {
    display: flex;
    height: 42px;
    background: #fafafa;
    border-bottom: 1px solid #ccc;
    padding: 2px 0 0 2px;
    box-sizing: border-box;
  }

  .tool-group {
    display: flex;
    flex-direction: column;
    align-items: flex-start;
    gap: 1px;
    height: 37px;
    box-sizing: border-box;
    padding: 1px 2px 0;
    border-right: 1px solid #ddd;
  }

  .tool-group button { display: flex; align-items: center; gap: 1px; line-height: 8px; }
  .tool-group small { align-self: center; margin-top: auto; font-size: 5px; line-height: 7px; color: #aaa; white-space: nowrap; }
  .tool-group .stacked { flex-direction: column; gap: 2px; line-height: 6px; margin: 0 auto; white-space: normal; text-align: center; }
  .tool-group .chosen { background: #dccbe6; }
  .hand { width: 33px; }
  .markup { width: 38px; }
  .marks { display: grid; grid-template-columns: repeat(3, 6px); gap: 7px 5px; margin: 3px auto 0; }
  .pins { width: 36px; }
  .pair { display: flex; width: 100%; justify-content: space-between; }
  .typing { width: 42px; }
  .boxes { display: grid; align-content: start; gap: 5px; }
  .drawing-tool { width: 25px; }
  .measure { width: 35px; }
  .stamps { width: 34px; }
  .manage { width: 35px; }
  .compare { width: 28px; }

  .pdf-docs {
    display: flex;
    align-items: center;
    height: 13px;
    box-sizing: border-box;
    padding: 2px 5px 0 18px;
    background: #e9e9e9;
    border-bottom: 1px solid #bbb;
  }

  .pdf-docs button { width: 61px; height: 10px; padding: 0 6px; background: #f1f1f1; border: 1px solid #c9c9c9; border-bottom: 0; border-radius: 4px 4px 0 0; text-align: left; }
  .pdf-docs .active { width: 72px; background: #fff; }
  .pdf-docs b { float: right; }
  .pdf-docs .caret { margin-left: auto; }

  .reader { display: flex; flex: 1; min-height: 0; }

  aside {
    display: flex;
    flex-direction: column;
    align-items: center;
    gap: 8px;
    width: 16px;
    padding-top: 1px;
    border-right: 2px solid #85868a;
  }

  .sheet {
    position: relative;
    display: flex;
    flex: 1;
    min-width: 0;
    overflow: hidden;
    background: #f3f0fc;
    border-right: 2px solid #18181a;
  }

  .watermark { position: absolute; inset: 0; width: 100%; height: 100%; }
  .holes { display: flex; flex-direction: column; gap: 11px; padding: 4px 5px; }
  .holes i { width: 5px; height: 13px; box-sizing: border-box; background: #dedde3; border: 1px solid #cdccd2; }

  article {
    position: relative;
    flex: 1;
    min-width: 0;
    padding: 1px 54px 0 35px;
    font: 6px/8px 'Liberation Sans', Arial, sans-serif;
    color: #38373f;
  }

  h2 { margin: 0; font: bold 6px/8px 'Liberation Serif', serif; text-decoration: underline; }
  h2.second { margin-top: 4px; }
  p, ul { margin: 0; padding: 0; list-style: none; }
  p span, .findings span { display: block; white-space: nowrap; text-align-last: justify; }
  p .left, .findings .left { text-align-last: left; }
  .main { margin-top: 8px; }
  .findings { margin-top: 8px; }
  .findings li { position: relative; padding-left: 11px; }
  .findings li + li { margin-top: 2px; }
  .findings li::before { content: '►'; position: absolute; left: 1px; }
  .boxed { outline: 1px solid #da3342; }
  sub { font-size: 4px; line-height: 0; }
  .seismic { margin-top: 7px; }
  .code { margin-top: 6px; }
  .slant { margin-top: 3px; font-style: italic; text-decoration: underline; white-space: nowrap; }
  .zones { margin-top: 3px; }
  .zones li::before { content: '•'; margin-right: 7px; }
  .close { margin-top: 0; }
  .intro { margin: 3px 0; white-space: nowrap; }

  table { width: 100%; border-collapse: collapse; table-layout: fixed; text-align: center; line-height: 7px; }
  th, td { height: 10px; box-sizing: border-box; padding: 0; border: 1px solid #55545c; white-space: pre-line; }
  th:first-child { width: 20%; }
  th:nth-child(2) { width: 19%; }
  th:nth-child(3) { width: 14%; }
  th:nth-child(4) { width: 20%; }

  .scroll { display: flex; flex-direction: column; align-items: center; width: 11px; padding: 4px 0; }
  .scroll i { width: 9px; height: 8px; margin-top: 54px; background: #c9c9c9; }
  .scroll .down { display: flex; margin-top: auto; }

  .pdf-foot {
    display: flex;
    align-items: center;
    gap: 3px;
    height: 13px;
    padding: 0 8px 0 90px;
    white-space: nowrap;
  }

  .pdf-foot select {
    appearance: none;
    width: 55px;
    height: 9px;
    padding: 0 2px;
    border: 1px solid #ccc;
    background: linear-gradient(#555, #555) 48px 3px / 2px 1px no-repeat #fff;
  }

  .pdf-foot span { margin-left: 8px; }
  .pdf-foot b { font: 9px 'DejaVu Sans', sans-serif; }
  .pdf-foot input { flex: 1; height: 8px; appearance: none; background: linear-gradient(#555, #555) center / 100% 1px no-repeat; }
  .pdf-foot input::-webkit-slider-thumb { appearance: none; width: 3px; height: 6px; background: #222; }

  /* Red review notes run across both windows */
  .markups { position: absolute; inset: 0; width: 100%; pointer-events: none; }
  .markups text { font: 18px 'Liberation Sans', Arial, sans-serif; font-kerning: none; fill: #e41e26; }
  .markups .small { font-size: 12px; }
  .markups path { fill: none; stroke: #f50c0c; stroke-width: 3; }
  .markups .thin { stroke: #dc1a24; stroke-width: 2; stroke-dasharray: 8 5; }
  .markups .faint { stroke-width: 1; }

  .taskbar {
    display: flex;
    flex: none;
    align-items: center;
    height: 19px;
    background: linear-gradient(90deg, #07080a, #0b0b0d 50%, #24272c);
    color: #e8e8e8;
  }

  .taskbar button { display: flex; align-items: center; justify-content: center; width: 25px; height: 19px; }
  .taskbar .running { background: #3b3340; }

  .tray { display: flex; align-items: center; gap: 4px; margin-left: auto; padding-right: 11px; }
  .hidden-icons { display: flex; margin-left: 6px; }
  time { margin: 0 6px 0 4px; font-size: 6px; line-height: 8px; text-align: center; }
</style>
